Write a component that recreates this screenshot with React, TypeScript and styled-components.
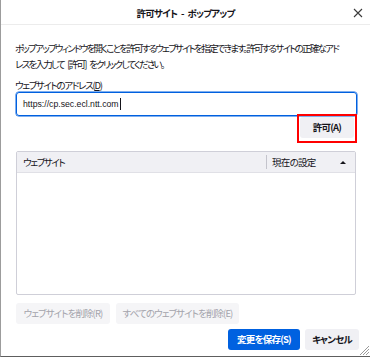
import styled, { createGlobalStyle } from 'styled-components';

const GlobalStyle = createGlobalStyle`
  html, body {
    margin: 0;
    padding: 0;
    background: #ffffff;
  }
  body {
    font-family: 'Noto Sans CJK JP', 'Noto Sans', sans-serif;
    font-feature-settings: 'palt';
    color: #15141a;
    font-size: 9.5px;
    letter-spacing: -1.3px;
  }
`;

const App = () => {
  return (
    <>
      <GlobalStyle />
      <Window>
        <TitleBar>
          <Title>許可サイト - ポップアップ</Title>
          <CloseButton aria-label="閉じる">
            <svg width="10" height="10" viewBox="0 0 10 10">
              <path d="M1 1L9 9M9 1L1 9" stroke="#3b3b3b" strokeWidth="1.1" />
            </svg>
          </CloseButton>
        </TitleBar>

        <Body>
          <Description>
            ポップアップウィンドウを開くことを許可するウェブサイトを指定できます。許可するサイトの正確なアド
            <br />
            レスを入力して [許可] をクリックしてください。
          </Description>

          <Label>
            ウェブサイトのアドレス(<u>D</u>)
          </Label>
          <UrlInput>
            https://cp.sec.ecl.ntt.com
            <Caret />
          </UrlInput>

          <AllowRow>
            <Highlight>
              <Button $width={54}>許可(A)</Button>
            </Highlight>
          </AllowRow>

          <SiteList>
            <ListHeader>
              <HeaderCell>ウェブサイト</HeaderCell>
              <HeaderCell $divider>
                現在の設定
                <SortArrow />
              </HeaderCell>
            </ListHeader>
          </SiteList>

          <ButtonRow>
            <Button disabled $width={94}>ウェブサイトを削除(R)</Button>
            <Button disabled $width={123}>すべてのウェブサイトを削除(E)</Button>
          </ButtonRow>

          <Footer>
            <Button $primary $width={72}>変更を保存(S)</Button>
            <Button $width={54}>キャンセル</Button>
          </Footer>
        </Body>

        <Grip>
          <svg width="10" height="10" viewBox="0 0 10 10">
            <path d="M10 1L1 10M10 4L4 10M10 7L7 10" stroke="#9a9a9a" strokeWidth="1" />
          </svg>
        </Grip>
      </Window>
    </>
  );
};

export default App;

const Window = styled.div`
  position: relative;
  width: 370px;
  height: 357px;
  box-sizing: border-box;
  border-left: 1px solid #9c9c9c;
  border-bottom: 1px solid #5e5e5e;
  background: #ffffff;
  display: flex;
  flex-direction: column;
`;

const TitleBar = styled.div`
  position: relative;
  height: 24px;
  border-bottom: 1px solid #ececec;
  display: flex;
  align-items: center;
  justify-content: center;
  flex-shrink: 0;
`;

const Title = styled.div`
  font-size: 9.5px;
  font-weight: 600;
  letter-spacing: -0.8px;
  word-spacing: 2.5px;
  line-height: 24px;
  padding-top: 1px;
`;

const CloseButton = styled.div`
  position: absolute;
  right: 7px;
  top: 8px;
  display: flex;
`;

const Body = styled.div`
  flex: 1;
  display: flex;
  flex-direction: column;
  padding: 15px 11px 0 14px;
`;

const Description = styled.p`
  margin: 0;
  line-height: 16px;
  white-space: nowrap;
  letter-spacing: -1.75px;
  word-spacing: 3px;
`;

const Label = styled.div`
  margin-top: 6px;
  line-height: 14px;

  u {
    text-underline-offset: 1px;
  }
`;

const UrlInput = styled.div`
  margin-left: 1px;
  margin-right: 2px;
  height: 24px;
  box-sizing: border-box;
  border: 1px solid #0060df;
  box-shadow: 0 0 0 0.5px #0060df;
  border-radius: 3px;
  display: flex;
  align-items: center;
  padding-left: 6px;
  font-family: 'Liberation Sans', 'Noto Sans', sans-serif;
  font-size: 8.7px;
  letter-spacing: 0;
`;

const Caret = styled.span`
  display: inline-block;
  width: 1px;
  height: 12px;
  background: #15141a;
  margin-left: 1px;
`;

const AllowRow = styled.div`
  display: flex;
  justify-content: flex-end;
  margin-top: -2px;
  margin-right: 2px;
`;

const Highlight = styled.div`
  border: 2px solid #ff0000;
  padding: 1px 1px 3px 1px;
`;

const Button = styled.button<{ $primary?: boolean; $width: number }>`
  width: ${({ $width }) => $width}px;
  height: 21px;
  padding: 0;
  border: none;
  border-radius: 3px;
  font-family: 'Noto Sans CJK JP', 'Noto Sans', sans-serif;
  font-feature-settings: 'palt';
  font-size: 9.5px;
  letter-spacing: -0.8px;
  font-weight: 600;
  line-height: 21px;
  background: ${({ $primary }) => ($primary ? '#0061e0' : '#f0f0f4')};
  color: ${({ $primary }) => ($primary ? '#ffffff' : '#15141a')};

  &:disabled {
    background: #f5f5f7;
    color: #a3a3ab;
    font-weight: 400;
    letter-spacing: -0.9px;
  }
`;

const SiteList = styled.div`
  margin-top: 8px;
  margin-left: 1px;
  margin-right: 3px;
  height: 144px;
  box-sizing: border-box;
  border: 1px solid #cfcfd8;
  border-radius: 2px;
`;

const ListHeader = styled.div`
  display: grid;
  grid-template-columns: 249px 1fr;
  height: 20px;
  background: #f0f0f4;
  border-bottom: 1px solid #e0e0e6;
`;

const HeaderCell = styled.div<{ $divider?: boolean }>`
  position: relative;
  display: flex;
  align-items: center;
  justify-content: space-between;
  padding: 0 ${({ $divider }) => ($divider ? '9px 0 6px' : '6px')};
  letter-spacing: ${({ $divider }) => ($divider ? '-0.7px' : '-1.3px')};
  ${({ $divider }) =>
    $divider &&
    `
    &::before {
      content: '';
      position: absolute;
      left: 0;
      top: 3px;
      bottom: 3px;
      width: 1px;
      background: #c4c4cc;
    }
  `}
`;

const SortArrow = styled.span`
  width: 0;
  height: 0;
  border-left: 3px solid transparent;
  border-right: 3px solid transparent;
  border-bottom: 3px solid #15141a;
`;

const ButtonRow = styled.div`
  display: flex;
  gap: 6px;
  margin-top: 8px;
  margin-left: 1px;
`;

const Footer = styled.div`
  display: flex;
  justify-content: flex-end;
  gap: 5px;
  margin-top: 5px;
`;

const Grip = styled.div`
  position: absolute;
  right: 1px;
  bottom: 1px;
  display: flex;
`;
